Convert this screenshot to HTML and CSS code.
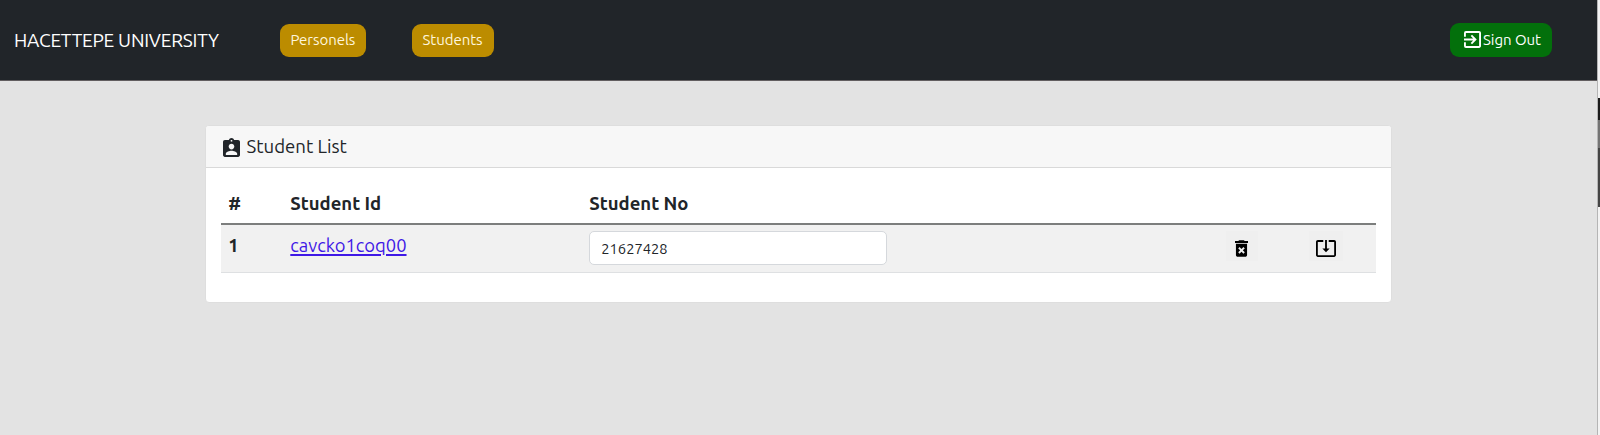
FILE: index.html
```html
<!DOCTYPE html>
<html lang="en">
<head>
<meta charset="utf-8">
<title>Student List</title>
<link rel="stylesheet" href="styles.css">
</head>
<body>
<div class="app">
  <div class="page">
    <nav class="navbar">
      <span class="brand">HACETTEPE UNIVERSITY</span>
      <a class="nav-btn personels"><span>Personels</span></a>
      <a class="nav-btn students"><span>Students</span></a>
      <button class="sign-out">
        <svg width="17" height="17" viewBox="3 3 18 18" fill="currentColor"><path d="M10.09 15.59 11.5 17l5-5-5-5-1.41 1.41L12.67 11H3v2h9.67l-2.58 2.59zM19 3H5a2 2 0 0 0-2 2v4h2V5h14v14H5v-4H3v4a2 2 0 0 0 2 2h14c1.100 0 2-.9 2-2V5c0-1.100-.9-2-2-2z"/></svg>
        <span>Sign Out</span>
      </button>
    </nav>
    <main class="card">
      <header class="card-header">
        <svg width="17" height="19" viewBox="3 1 18 20" preserveAspectRatio="none" fill="currentColor"><path d="M19 3h-4.180C14.400 1.840 13.300 1 12 1s-2.400.84-2.820 2H5a2 2 0 0 0-2 2v14c0 1.100.9 2 2 2h14c1.100 0 2-.9 2-2V5c0-1.100-.9-2-2-2zm-7 0c.55 0 1 .45 1 1s-.45 1-1 1-1-.45-1-1 .45-1 1-1zm0 4c1.660 0 3 1.340 3 3s-1.340 3-3 3-3-1.340-3-3 1.340-3 3-3zm6 12H6v-1.400c0-2 4-3.100 6-3.100s6 1.100 6 3.100V19z"/></svg>
        <span class="title">Student List</span>
      </header>
      <div class="card-body">
        <div class="row head">
          <span>#</span><span>Student Id</span><span>Student No</span>
        </div>
        <div class="row data">
          <b>1</b>
          <a class="link" href="#">cavcko1coq00</a>
          <input class="field" type="text" value="21627428">
          <button class="icon-btn delete" aria-label="Delete"><svg width="13" height="17" viewBox="5 3 14 18"><path d="M6 19c0 1.100.9 2 2 2h8c1.100 0 2-.9 2-2V7H6v12zm2.460-7.120 1.410-1.410L12 12.590l2.120-2.120 1.410 1.410L13.410 14l2.120 2.120-1.410 1.410L12 15.410l-2.120 2.120-1.410-1.410L10.590 14l-2.130-2.120zM15.500 4l-1-1h-5l-1 1H5v2h14V4z"/></svg></button>
          <button class="icon-btn save" aria-label="Save"><svg width="20" height="17" viewBox="1 3 22 18" preserveAspectRatio="none"><path d="m12 16.500 4-4h-3v-9h-2v9H8l4 4zm9-13h-6v1.990h6v14.030H3V5.490h6V3.500H3c-1.100 0-2 .9-2 2v14c0 1.100.9 2 2 2h18c1.100 0 2-.9 2-2v-14c0-1.100-.9-2-2-2z" transform="translate(0 -.5)"/></svg></button>
        </div>
      </div>
    </main>
  </div>
  <aside class="edge"><i class="black"></i><i class="mid"></i><i class="dark"></i></aside>
</div>
</body>
</html>
```
FILE: styles.css
```css
* { box-sizing: border-box; }
body { margin: 0; font-family: Ubuntu, "Noto Sans", sans-serif; color: #212529; background: #e3e3e3; }
.app { display: flex; height: 435px; overflow: hidden; }
.page { flex: 1; background: #e3e3e3; }
.edge { width: 3px; border-left: 1px solid #b5b5b5; background: #f3f3f3; padding-top: 98px; }
.edge i { display: block; }
.edge .black { height: 22px; background: #1b1b1b; }
.edge .mid { height: 28px; background: #747474; }
.edge .dark { height: 59px; background: #444; }

.navbar { display: flex; align-items: flex-start; height: 81px; padding: 23px 45px 0 14px; background: #212529; border-bottom: 1px solid #625e60; }
.brand { width: 266px; font-size: 19px; line-height: 34px; letter-spacing: -0.22px; color: #fff; white-space: nowrap; }
.nav-btn, .sign-out { display: flex; align-items: center; border: 0; border-radius: 9px; color: #fff; font: 15px/20px Ubuntu, "Noto Sans", sans-serif; letter-spacing: -0.05px; white-space: nowrap; }
.nav-btn { height: 33px; margin-top: 1px; padding: 0 0 2px 10.500px; background: #bc8c00; color: #fff6dc; }
.personels { width: 86px; }
.students { width: 82px; margin-left: 46px; }
.sign-out { width: 102px; height: 34px; margin-left: auto; padding: 0 0 1px 14px; gap: 2px; background: #03700b; }

.card { width: 1187px; height: 178px; margin: 44px 0 0 205px; background: #fff; border: 1px solid #dedede; border-radius: 4px; }
.card-header { display: flex; align-items: center; height: 42px; padding: 1px 0 0 17px; background: #f7f7f7; border-bottom: 1px solid #d9d9d9; border-radius: 3px 3px 0 0; }
.card-header svg { margin-top: 1px; }
.title { margin: -1px 0 0 6.500px; font-size: 18.600px; }
.card-body { padding: 15px 15px 0 15px; }
.row { display: grid; grid-template-columns: 62px 299px 637px 83px 1fr; padding-left: 7.300px; font-size: 18.500px; }
.head { height: 42px; padding-top: 8px; line-height: 24px; font-weight: 700; border-bottom: 2px solid #7c7e7d; }
.data { height: 48px; padding-top: 6px; background: #f1f1f1; border-bottom: 1px solid #dee0e2; line-height: 28px; }
.link { justify-self: start; align-self: start; color: #3f18e6; font-size: 18.400px; text-underline-offset: 2px; text-decoration-thickness: 1.500px; }
.field { width: 298px; height: 34px; padding: 0 11px; border: 1px solid #d5d8dc; border-radius: 5px; background: #fff; color: #212529; font: 14.700px Ubuntu, "Noto Sans", sans-serif; }
.icon-btn { display: flex; align-items: center; justify-content: center; width: 32px; height: 30px; padding: 5px 1px 0 0; border: 0; background: #efefef; }
.save { width: 34px; }
```
